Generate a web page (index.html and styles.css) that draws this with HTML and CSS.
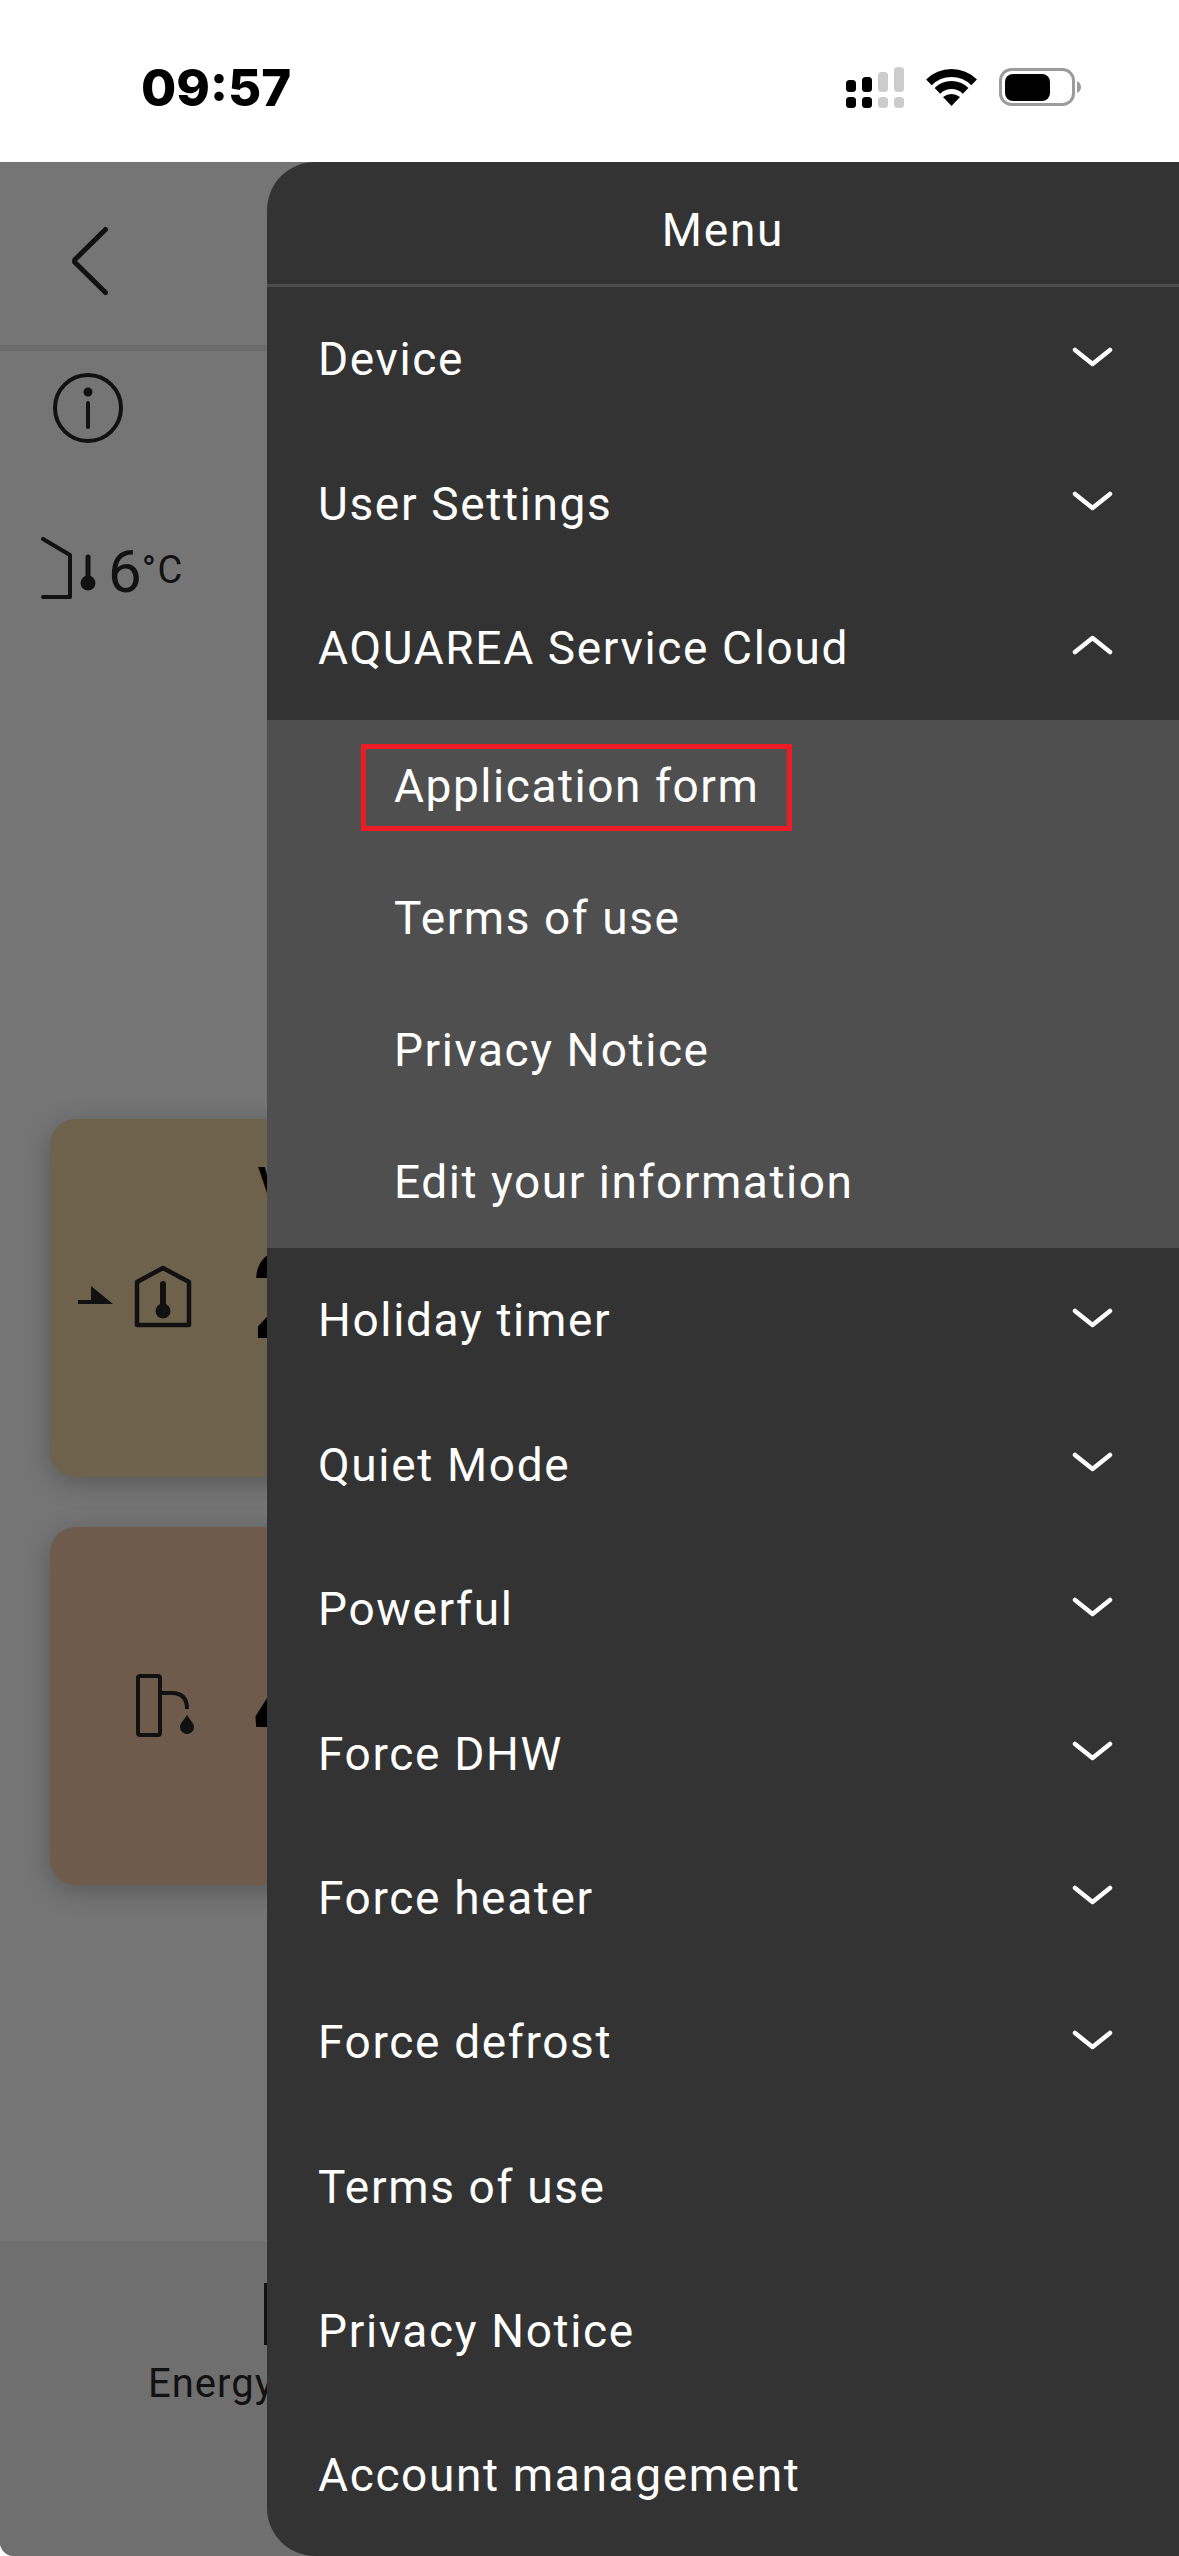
FILE: index.html
```html
<!DOCTYPE html>
<html lang="en">
<head>
    <meta charset="UTF-8">
    <meta name="viewport" content="width=device-width, initial-scale=1.0">
    <title>Menu</title>
    <link rel="stylesheet" href="styles.css">
</head>
<body>
    <header class="status-bar">
        <span class="clock">09:57</span>
        <div class="status-icons">
            <svg class="signal" width="58" height="41" viewBox="0 0 58 41">
                <rect x="0" y="13" width="10" height="12" rx="3.5" fill="#000"/>
                <rect x="16" y="10" width="10" height="15" rx="3.5" fill="#000"/>
                <rect x="32" y="5" width="10" height="20" rx="3.5" fill="#ccc"/>
                <rect x="48" y="0" width="10" height="25" rx="3.5" fill="#ccc"/>
                <rect x="0" y="30" width="10" height="11" rx="3.5" fill="#000"/>
                <rect x="16" y="30" width="10" height="11" rx="3.5" fill="#000"/>
                <rect x="32" y="30" width="10" height="11" rx="3.5" fill="#ccc"/>
                <rect x="48" y="30" width="10" height="11" rx="3.5" fill="#ccc"/>
            </svg>
            <svg class="wifi" width="51" height="38" viewBox="0 0 51 38">
                <path d="M2.9 14.4A32 32 0 0 1 48.1 14.4" fill="none" stroke="#000" stroke-width="8"/>
                <path d="M11.4 22.9A20 20 0 0 1 39.6 22.9" fill="none" stroke="#000" stroke-width="8"/>
                <path d="M25.5 38L17 29Q25.5 23 34 29Z" fill="#000"/>
            </svg>
            <svg class="battery" width="82" height="38" viewBox="0 0 82 38">
                <rect x="1.5" y="1.5" width="73" height="35" rx="11" fill="none" stroke="#9b9b9b" stroke-width="3"/>
                <rect x="6" y="6" width="45" height="27" rx="8" fill="#000"/>
                <path d="M78 13Q82 15 82 19Q82 23 78 25Z" fill="#9b9b9b"/>
            </svg>
        </div>
    </header>

    <div class="screen">
        <div class="top-bar">
            <svg width="44" height="76" viewBox="0 0 44 76">
                <path d="M38.5 6.5L8 36.5Q7 38 8 39.5L38.5 69.5" fill="none" stroke="#111" stroke-width="5" stroke-linecap="round" stroke-linejoin="round"/>
            </svg>
        </div>

        <main class="content">
            <svg class="info" width="76" height="76" viewBox="0 0 76 76">
                <circle cx="38" cy="38" r="33" fill="none" stroke="#111" stroke-width="4"/>
                <circle cx="38" cy="22" r="4.5" fill="#111"/>
                <path d="M38 33V57" stroke="#111" stroke-width="4" stroke-linecap="round"/>
            </svg>

            <div class="outdoor">
                <svg width="58" height="66" viewBox="0 0 58 66">
                    <path d="M2 2L29 18V60H2" fill="none" stroke="#111" stroke-width="4" stroke-linecap="round" stroke-linejoin="round"/>
                    <path d="M47 20V46" stroke="#111" stroke-width="5" stroke-linecap="round"/>
                    <circle cx="47" cy="46" r="7.5" fill="#111"/>
                </svg>
                <span class="outdoor-value">6</span>
                <span class="outdoor-unit">°C</span>
            </div>

            <section class="card card-zone">
                <svg class="card-icon" width="150" height="70" viewBox="0 0 150 70">
                    <path d="M41 23L63 41H41Z" fill="#111"/>
                    <path d="M28 39H42" stroke="#111" stroke-width="4"/>
                    <path d="M87 19L113 5L139 19V62H87Z" fill="none" stroke="#111" stroke-width="4.5" stroke-linejoin="round"/>
                    <path d="M113 21V48" stroke="#111" stroke-width="6" stroke-linecap="round"/>
                    <circle cx="113" cy="48" r="7.5" fill="#111"/>
                </svg>
                <div class="reading">
                    <span class="reading-label">V</span>
                    <span class="reading-value">2</span>
                </div>
            </section>

            <section class="card card-tank">
                <svg class="card-icon" width="150" height="70" viewBox="0 0 150 70">
                    <rect x="88" y="5" width="22" height="59" rx="2" fill="none" stroke="#111" stroke-width="4"/>
                    <path d="M110 22H122Q137 22 137 38" fill="none" stroke="#111" stroke-width="4"/>
                    <path d="M137 44C140 49 144 52 144 56A7 7 0 0 1 130 56C130 52 134 49 137 44Z" fill="#111"/>
                </svg>
                <div class="reading reading-bare">
                    <span class="reading-value">4</span>
                </div>
            </section>
        </main>

        <footer class="bottom-bar">
            <div class="bottom-icon"></div>
            <span class="bottom-label">Energy</span>
        </footer>

        <nav class="menu">
            <h1 class="menu-title">Menu</h1>
            <ul class="menu-list">
                <li class="menu-row">Device<svg class="chevron" width="41" height="20" viewBox="0 0 41 20"><path d="M3 3L20.5 17L38 3"/></svg></li>
                <li class="menu-row">User Settings<svg class="chevron" width="41" height="20" viewBox="0 0 41 20"><path d="M3 3L20.5 17L38 3"/></svg></li>
                <li class="menu-row">AQUAREA Service Cloud<svg class="chevron" width="41" height="20" viewBox="0 0 41 20"><path d="M3 17L20.5 3L38 17"/></svg></li>
                <li>
                    <ul class="sub-list">
                        <li class="sub-row"><span class="sub-label sub-label-marked">Application form</span></li>
                        <li class="sub-row"><span class="sub-label">Terms of use</span></li>
                        <li class="sub-row"><span class="sub-label">Privacy Notice</span></li>
                        <li class="sub-row"><span class="sub-label">Edit your information</span></li>
                    </ul>
                </li>
                <li class="menu-row">Holiday timer<svg class="chevron" width="41" height="20" viewBox="0 0 41 20"><path d="M3 3L20.5 17L38 3"/></svg></li>
                <li class="menu-row">Quiet Mode<svg class="chevron" width="41" height="20" viewBox="0 0 41 20"><path d="M3 3L20.5 17L38 3"/></svg></li>
                <li class="menu-row">Powerful<svg class="chevron" width="41" height="20" viewBox="0 0 41 20"><path d="M3 3L20.5 17L38 3"/></svg></li>
                <li class="menu-row">Force DHW<svg class="chevron" width="41" height="20" viewBox="0 0 41 20"><path d="M3 3L20.5 17L38 3"/></svg></li>
                <li class="menu-row">Force heater<svg class="chevron" width="41" height="20" viewBox="0 0 41 20"><path d="M3 3L20.5 17L38 3"/></svg></li>
                <li class="menu-row">Force defrost<svg class="chevron" width="41" height="20" viewBox="0 0 41 20"><path d="M3 3L20.5 17L38 3"/></svg></li>
                <li class="menu-row">Terms of use</li>
                <li class="menu-row">Privacy Notice</li>
                <li class="menu-row">Account management</li>
            </ul>
        </nav>
    </div>
</body>
</html>
```

FILE: styles.css
```css
* {
    box-sizing: border-box;
}

body {
    margin: 0;
    width: 1179px;
    height: 2556px;
    overflow: hidden;
    background-color: #fff;
    font-family: Roboto, Arial, sans-serif;
}

.status-bar {
    display: flex;
    justify-content: space-between;
    align-items: center;
    height: 162px;
    padding: 0 98px 0 141px;
    background-color: #fff;
}

.clock {
    margin-top: 12px;
    font-family: Inter, Arial, sans-serif;
    font-size: 51px;
    font-weight: 800;
    color: #000;
}

.status-icons {
    display: flex;
    align-items: center;
    gap: 22px;
    margin-top: 12px;
}

.screen {
    position: relative;
    display: flex;
    flex-direction: column;
    height: 2394px;
    overflow: hidden;
    background-color: #757575;
    border-radius: 0 0 0 14px;
}

.top-bar {
    display: flex;
    align-items: center;
    height: 189px;
    padding: 15px 0 0 67px;
    border-bottom: 6px solid #6b6b6b;
}

.content {
    flex: 1;
    padding: 19px 0 0 50px;
}

.info {
    display: block;
}

.outdoor {
    display: flex;
    align-items: center;
    height: 66px;
    margin: 91px 0 0 -9px;
    color: #111;
}

.outdoor-value {
    margin: 2px 0 0 9px;
    font-size: 60px;
}

.outdoor-unit {
    margin-left: 0;
    font-size: 38px;
    letter-spacing: 1.5px;
}

.card {
    display: flex;
    align-items: center;
    width: 1000px;
    height: 358px;
    border-radius: 26px;
    box-shadow: 0 6px 26px rgba(0, 0, 0, 0.25);
}

.card-zone {
    margin-top: 516px;
    background-color: #6f624c;
}

.card-tank {
    margin-top: 50px;
    background-color: #6e5b4b;
}

.card-icon {
    flex-shrink: 0;
}

.reading {
    display: flex;
    flex-direction: column;
    align-self: flex-start;
    margin-left: 52px;
    padding-top: 44px;
    color: #000;
}

.reading-bare {
    padding-top: 118px;
}

.reading-label {
    height: 40px;
    margin: 0 0 34px 6px;
    font-size: 40px;
    font-weight: 700;
    line-height: 40px;
}

.reading-value {
    font-size: 122px;
    font-weight: 700;
    line-height: 120px;
}

.bottom-bar {
    display: flex;
    flex-direction: column;
    height: 315px;
    padding: 42px 0 0 148px;
    background-color: #6f6f6f;
}

.bottom-icon {
    width: 20px;
    height: 62px;
    margin-left: 116px;
    border-left: 3px solid #111;
}

.bottom-label {
    margin-top: 15px;
    font-size: 40px;
    line-height: 48px;
    letter-spacing: 1px;
    color: #111;
}

.menu {
    position: absolute;
    top: 0;
    right: 0;
    bottom: 0;
    width: 912px;
    background-color: #333;
    border-radius: 48px 0 0 48px;
    color: #fff;
    overflow: hidden;
}

.menu-title {
    height: 125px;
    margin: 0;
    border-bottom: 3px solid #4d4d4d;
    font-size: 46px;
    font-weight: 400;
    line-height: 136px;
    letter-spacing: 1.75px;
    text-align: center;
}

.menu-list,
.sub-list {
    list-style-type: none;
    margin: 0;
    padding: 0;
}

.menu-row {
    display: flex;
    justify-content: space-between;
    align-items: center;
    height: 144.4px;
    padding: 0 66px 0 51px;
    font-size: 46px;
    letter-spacing: 1.65px;
}

.sub-list {
    background-color: #4f4f4f;
}

.sub-row {
    display: flex;
    align-items: center;
    height: 132px;
    padding-left: 94px;
    font-size: 46px;
    letter-spacing: 1.55px;
}

.sub-label {
    height: 87px;
    margin-top: 2px;
    padding: 0 28px;
    border: 5px solid transparent;
    line-height: 75px;
}

.sub-label-marked {
    border-color: #ed1c24;
}

.chevron {
    margin-bottom: 5px;
}

.chevron path {
    fill: none;
    stroke: #fff;
    stroke-width: 4.5;
    stroke-linecap: round;
    stroke-linejoin: round;
}
```
